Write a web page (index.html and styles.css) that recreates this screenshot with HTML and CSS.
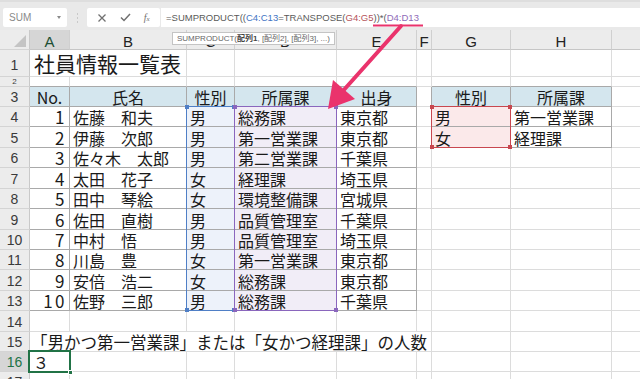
FILE: index.html
```html
<!DOCTYPE html>
<html lang="ja">
<head>
<meta charset="utf-8">
<title>社員情報一覧表</title>
<link rel="stylesheet" href="styles.css">
</head>
<body>
<div class="app">
  <div class="fbar">
    <div class="namebox">SUM<span class="dd"></span></div>
    <div class="vsep"><span></span><span></span><span></span></div>
    <div class="fbtns">
      <svg width="10" height="10" viewBox="0 0 10 10"><path d="M1.5 1.5 L8.5 8.5 M8.5 1.5 L1.5 8.5" stroke="#707070" stroke-width="1.3"/></svg>
      <svg width="11" height="9" viewBox="0 0 11 9"><path d="M1 4.5 L4 7.5 L10 1" stroke="#707070" stroke-width="1.5" fill="none"/></svg>
      <span class="fx">f<small>x</small></span>
    </div>
    <div class="finput"><span>=SUMPRODUCT((</span><span class="rb">C4:C13</span><span>=TRANSPOSE(</span><span class="rr">G4:G5</span><span>))*(</span><span class="rp">D4:D13</span></div>
  </div>

  <div class="sheet">
    <div class="row h20">
      <div class="cell rh corner"><svg width="14" height="14" viewBox="0 0 14 14"><polygon points="13,1 13,13 1,13" fill="#c4c4c4"/></svg></div>
      <div class="cell ch a csel">A</div>
      <div class="cell ch b">B</div>
      <div class="cell ch c">C</div>
      <div class="cell ch d">D</div>
      <div class="cell ch e">E</div>
      <div class="cell ch f">F</div>
      <div class="cell ch g">G</div>
      <div class="cell ch h">H</div>
      <div class="cell ch i"></div>
    </div>

    <div class="row h27">
      <div class="cell rh rh1">1</div>
      <div class="cell ab title">社員情報一覧表</div>
      <div class="cell c"></div><div class="cell d"></div><div class="cell e"></div><div class="cell f"></div><div class="cell g"></div><div class="cell h"></div><div class="cell i"></div>
    </div>

    <div class="row h10">
      <div class="cell rh rh2">2</div>
      <div class="cell a tb"></div><div class="cell b tb"></div><div class="cell c tb"></div><div class="cell d tb"></div><div class="cell e tb"></div><div class="cell f"></div><div class="cell g tb"></div><div class="cell h tb"></div><div class="cell i"></div>
    </div>

    <div class="row h20">
      <div class="cell rh">3</div>
      <div class="cell a t hd ctr">No.</div>
      <div class="cell b t hd ctr">氏名</div>
      <div class="cell c t hd ctr">性別</div>
      <div class="cell d t hd ctr">所属課</div>
      <div class="cell e t hd ctr">出身</div>
      <div class="cell f tr"></div>
      <div class="cell g t hd ctr">性別</div>
      <div class="cell h t hd ctr">所属課</div>
      <div class="cell i"></div>
    </div>

    <div class="row h20">
      <div class="cell rh">4</div>
      <div class="cell a t num">1</div><div class="cell b t">佐藤　和夫</div><div class="cell c t fc">男</div><div class="cell d t fd">総務課</div><div class="cell e t">東京都</div>
      <div class="cell f tr"></div><div class="cell g t fg">男</div><div class="cell h t">第一営業課</div><div class="cell i"></div>
    </div>
    <div class="row h21">
      <div class="cell rh">5</div>
      <div class="cell a t num">2</div><div class="cell b t">伊藤　次郎</div><div class="cell c t fc">男</div><div class="cell d t fd">第一営業課</div><div class="cell e t">東京都</div>
      <div class="cell f tr"></div><div class="cell g t fg">女</div><div class="cell h t">経理課</div><div class="cell i"></div>
    </div>
    <div class="row h20">
      <div class="cell rh">6</div>
      <div class="cell a t num">3</div><div class="cell b t">佐々木　太郎</div><div class="cell c t fc">男</div><div class="cell d t fd">第二営業課</div><div class="cell e t">千葉県</div>
      <div class="cell f"></div><div class="cell g"></div><div class="cell h"></div><div class="cell i"></div>
    </div>
    <div class="row h21">
      <div class="cell rh">7</div>
      <div class="cell a t num">4</div><div class="cell b t">太田　花子</div><div class="cell c t fc">女</div><div class="cell d t fd">経理課</div><div class="cell e t">埼玉県</div>
      <div class="cell f"></div><div class="cell g"></div><div class="cell h"></div><div class="cell i"></div>
    </div>
    <div class="row h20">
      <div class="cell rh">8</div>
      <div class="cell a t num">5</div><div class="cell b t">田中　琴絵</div><div class="cell c t fc">女</div><div class="cell d t fd">環境整備課</div><div class="cell e t">宮城県</div>
      <div class="cell f"></div><div class="cell g"></div><div class="cell h"></div><div class="cell i"></div>
    </div>
    <div class="row h21">
      <div class="cell rh">9</div>
      <div class="cell a t num">6</div><div class="cell b t">佐田　直樹</div><div class="cell c t fc">男</div><div class="cell d t fd">品質管理室</div><div class="cell e t">千葉県</div>
      <div class="cell f"></div><div class="cell g"></div><div class="cell h"></div><div class="cell i"></div>
    </div>
    <div class="row h20">
      <div class="cell rh">10</div>
      <div class="cell a t num">7</div><div class="cell b t">中村　悟</div><div class="cell c t fc">男</div><div class="cell d t fd">品質管理室</div><div class="cell e t">埼玉県</div>
      <div class="cell f"></div><div class="cell g"></div><div class="cell h"></div><div class="cell i"></div>
    </div>
    <div class="row h20">
      <div class="cell rh">11</div>
      <div class="cell a t num">8</div><div class="cell b t">川島　豊</div><div class="cell c t fc">女</div><div class="cell d t fd">第一営業課</div><div class="cell e t">東京都</div>
      <div class="cell f"></div><div class="cell g"></div><div class="cell h"></div><div class="cell i"></div>
    </div>
    <div class="row h21">
      <div class="cell rh">12</div>
      <div class="cell a t num">9</div><div class="cell b t">安倍　浩二</div><div class="cell c t fc">女</div><div class="cell d t fd">総務課</div><div class="cell e t">東京都</div>
      <div class="cell f"></div><div class="cell g"></div><div class="cell h"></div><div class="cell i"></div>
    </div>
    <div class="row h20">
      <div class="cell rh">13</div>
      <div class="cell a t num">10</div><div class="cell b t">佐野　三郎</div><div class="cell c t fc">男</div><div class="cell d t fd">総務課</div><div class="cell e t">千葉県</div>
      <div class="cell f"></div><div class="cell g"></div><div class="cell h"></div><div class="cell i"></div>
    </div>
    <div class="row h21">
      <div class="cell rh">14</div>
      <div class="cell a"></div><div class="cell b"></div><div class="cell c"></div><div class="cell d"></div><div class="cell e"></div><div class="cell f"></div><div class="cell g"></div><div class="cell h"></div><div class="cell i"></div>
    </div>
    <div class="row h20">
      <div class="cell rh">15</div>
      <div class="cell af note">「男かつ第一営業課」または「女かつ経理課」の人数</div>
      <div class="cell g"></div><div class="cell h"></div><div class="cell i"></div>
    </div>
    <div class="row h20">
      <div class="cell rh rsel">16</div>
      <div class="cell a">３</div><div class="cell b"></div><div class="cell c"></div><div class="cell d"></div><div class="cell e"></div><div class="cell f"></div><div class="cell g"></div><div class="cell h"></div><div class="cell i"></div>
    </div>
    <div class="row h20">
      <div class="cell rh">17</div>
      <div class="cell a"></div><div class="cell b"></div><div class="cell c"></div><div class="cell d"></div><div class="cell e"></div><div class="cell f"></div><div class="cell g"></div><div class="cell h"></div><div class="cell i"></div>
    </div>

    <div class="range rng-c"><i class="k tl"></i><i class="k tr2"></i><i class="k bl"></i><i class="k br"></i></div>
    <div class="range rng-d"><i class="k tl"></i><i class="k tr2"></i><i class="k bl"></i><i class="k br"></i></div>
    <div class="range rng-g"><i class="k tl"></i><i class="k tr2"></i><i class="k bl"></i><i class="k br"></i></div>
    <div class="selbox"><i class="handle"></i></div>

    <div class="tip">SUMPRODUCT(<b>配列1</b>, [配列2], [配列3], ...)</div>
  </div>

  <svg class="arrow" width="640" height="379" viewBox="0 0 640 379">
    <line x1="373" y1="25.5" x2="423" y2="25.5" stroke="#ea336c" stroke-width="2"/>
    <line x1="401" y1="26" x2="342" y2="92" stroke="#ea336c" stroke-width="4" stroke-linecap="round"/>
    <polygon points="328,109 333,80 355,99" fill="#ea336c"/>
  </svg>
</div>
</body>
</html>
```
FILE: styles.css
```css
* { box-sizing: border-box; }

body {
  margin: 0;
  background: #ffffff;
  font-family: "Noto Sans CJK JP", "Noto Sans", sans-serif;
}

.app {
  position: relative;
  width: 640px;
  height: 379px;
  overflow: hidden;
}

/* formula bar */
.fbar {
  height: 30px;
  background: #e9e9e9;
  border-top: 2px solid #dedede;
  padding-top: 6px;
  display: flex;
  align-items: flex-start;
}

.namebox {
  margin-left: 3px;
  width: 64px;
  height: 19px;
  background: #ffffff;
  border-radius: 2px;
  display: flex;
  align-items: center;
  padding-left: 6px;
  font: 10px "Liberation Sans", sans-serif;
  color: #8a8a8a;
  position: relative;
}

.dd {
  position: absolute;
  right: 6px;
  top: 8px;
  border-left: 2.5px solid transparent;
  border-right: 2.5px solid transparent;
  border-top: 3px solid #8a8a8a;
}

.vsep {
  width: 20px;
  height: 19px;
  display: flex;
  flex-direction: column;
  align-items: center;
  justify-content: center;
  gap: 2px;
}

.vsep span {
  width: 1px;
  height: 2px;
  background: #c9c9c9;
}

.fbtns {
  width: 73px;
  height: 19px;
  background: #ffffff;
  border-radius: 2px;
  display: flex;
  align-items: center;
  justify-content: space-around;
  padding: 0 4px;
}

.fx {
  font: italic 10px "Liberation Serif", serif;
  color: #707070;
}

.fx small { font-size: 7px; }

.finput {
  flex: 1;
  height: 19px;
  margin-left: 1px;
  background: #ffffff;
  padding-left: 5px;
  display: flex;
  align-items: center;
  white-space: nowrap;
  font: 9.5px "Liberation Sans", sans-serif;
  color: #5a5a5a;
}

.rb { color: #3f74c4; }
.rr { color: #b5545a; }
.rp { color: #8f6bb8; }

/* sheet */
.sheet { position: relative; }

.row { display: flex; }
.h10 { height: 10px; }
.h20 { height: 20px; }
.h21 { height: 21px; }
.h27 { height: 27px; }

.cell {
  flex: none;
  height: 100%;
  border-right: 1px solid #dcdcdc;
  border-bottom: 1px solid #dcdcdc;
  display: flex;
  align-items: center;
  white-space: nowrap;
  padding: 1px 0 0 3px;
  font-size: 16px;
  line-height: 16px;
  color: #1a1a1a;
}

.rh { width: 30px; }
.a { width: 40px; }
.b { width: 117px; }
.c { width: 48px; }
.d { width: 102px; }
.e { width: 80px; }
.f { width: 15px; }
.g { width: 79px; }
.h { width: 101px; }
.i { width: 60px; }
.ab { width: 157px; }
.af { width: 402px; }

.rh {
  background: #ececec;
  border-right-color: #c9c9c9;
  border-bottom-color: #d4d4d4;
  justify-content: center;
  padding: 1px 0 0 0;
  font: 14px/14px "Liberation Sans", sans-serif;
  color: #3a3a3a;
}

.rh1 { align-items: flex-end; padding-bottom: 4px; }
.rh2 { padding: 0; font-size: 8px; line-height: 8px; }

.corner {
  justify-content: flex-end;
  align-items: flex-end;
  padding: 0 2px 1px 0;
}

.ch {
  background: #ececec;
  border-right-color: #d0d0d0;
  border-bottom-color: #c6c6c6;
  justify-content: center;
  padding: 4px 0 0 0;
  font: 15px/15px "Liberation Sans", sans-serif;
  color: #222222;
}

.csel { background: #d6d6d6; color: #1c4f33; }
.rsel { background: #d6d6d6; color: #217346; }

.title {
  font-size: 21px;
  line-height: 21px;
  align-items: flex-end;
  padding: 0 0 2px 4px;
}

.note {
  font-size: 16.5px;
  padding-left: 1px;
}

.t { border-right-color: #a9a9a9; border-bottom-color: #a9a9a9; }
.tb { border-bottom-color: #a9a9a9; }
.tr { border-right-color: #a9a9a9; }

.hd { background: #d4e6ee; }
.fc { background: #edf2fa; }
.fd { background: #f1edf7; }
.fg { background: #fbe9ea; }

.ctr { justify-content: center; padding-left: 0; }
.num {
  justify-content: flex-end;
  padding: 1px 2px 0 0;
  font-size: 17px;
  letter-spacing: 2.5px;
}

/* range highlights */
.range {
  position: absolute;
  top: 76px;
  height: 205px;
  border: 1px solid;
}

.rng-c { left: 186px; width: 49px; border-color: #4f7fc6; }
.rng-d { left: 234px; width: 103px; border-color: #8a66bd; }
.rng-g { left: 431px; width: 80px; height: 42px; border-color: #c8474f; }

.k {
  position: absolute;
  width: 4px;
  height: 4px;
}

.rng-c .k { background: #4f7fc6; }
.rng-d .k { background: #8a66bd; }
.rng-g .k { background: #c8474f; }

.tl { left: -2px; top: -2px; }
.tr2 { right: -2px; top: -2px; }
.bl { left: -2px; bottom: -2px; }
.br { right: -2px; bottom: -2px; }

.selbox {
  position: absolute;
  left: 28px;
  top: 320px;
  width: 43px;
  height: 23px;
  border: 2px solid #217346;
}

.handle {
  position: absolute;
  right: -4px;
  bottom: -4px;
  width: 5px;
  height: 5px;
  background: #217346;
  border: 1px solid #ffffff;
}

.tip {
  position: absolute;
  left: 172px;
  top: 2px;
  width: 163px;
  height: 13px;
  background: #ffffff;
  border: 1px solid #c4c4c4;
  padding-left: 4px;
  font: 8px/11px "Liberation Sans", "Noto Sans CJK JP", sans-serif;
  color: #666666;
  white-space: nowrap;
}

.tip b { color: #444444; }

.arrow {
  position: absolute;
  left: 0;
  top: 0;
  pointer-events: none;
}
```
